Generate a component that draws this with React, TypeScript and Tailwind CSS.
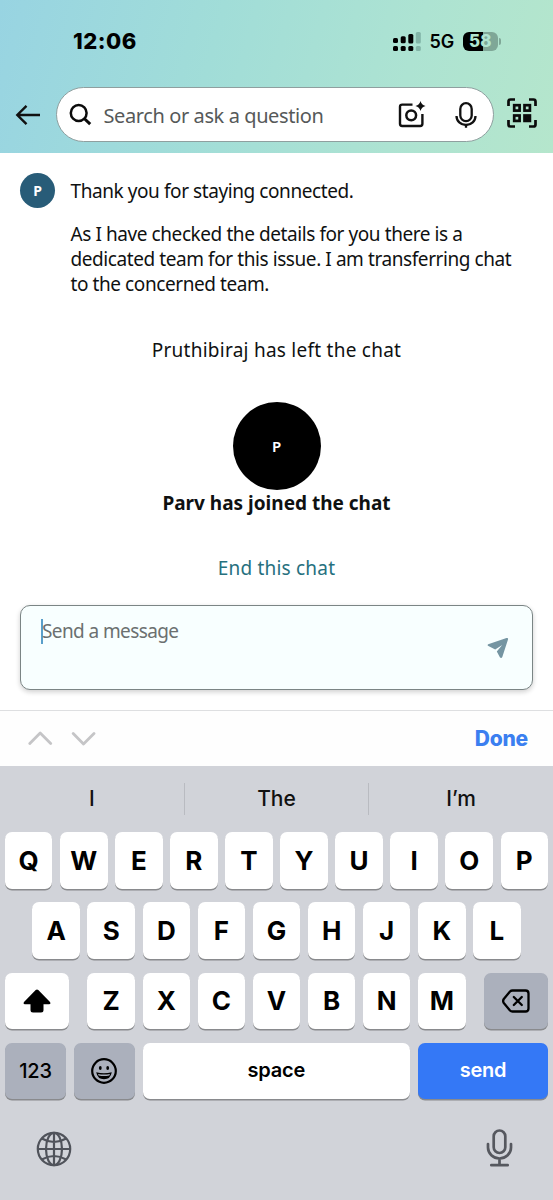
import type { ReactNode } from "react";
import clsx from "clsx";

const rows = ["QWERTYUIOP", "ASDFGHJKL", "ZXCVBNM"];
const suggestions = ["I", "The", "I’m"];

function StatusBar() {
  return (
    <div className="flex h-[82px] items-center pl-[73px] pr-[52px] font-['Inter',sans-serif] text-black">
      <span className="text-[22px] font-extrabold leading-none tracking-[0.5px]">12:06</span>
      <svg className="ml-auto" width="28" height="19" viewBox="0 0 28 19">
        <rect x="0" y="6" width="5" height="5" rx="1.5" />
        <rect x="7.7" y="4.3" width="5" height="7" rx="1.5" />
        <rect x="15.3" y="2" width="5" height="9.5" rx="1.5" />
        <rect x="0" y="14" width="5" height="5" rx="1.5" />
        <rect x="7.7" y="14" width="5" height="5" rx="1.5" />
        <rect x="15.3" y="14" width="5" height="5" rx="1.5" />
        <g fill="#82b5a7">
          <rect x="22.8" y="0" width="5" height="11.5" rx="1.5" />
          <rect x="22.8" y="14" width="5" height="5" rx="1.5" />
        </g>
      </svg>
      <span className="ml-[9px] w-[27px] pt-px text-[18px] font-semibold leading-none">5G</span>
      <div className="ml-[6px] flex h-[19px] w-[35.5px] items-center justify-center rounded-[6px] bg-linear-to-r from-black from-58% to-[#7fa797] to-58%">
        <span className="text-[17px] font-extrabold leading-none text-[#b0e5d0]">58</span>
      </div>
      <span className="ml-px h-[7px] w-[2px] rounded-r-full bg-[#7fa797]" />
    </div>
  );
}

function SearchHeader() {
  return (
    <div className="flex items-center pl-[15px] pt-[5px]">
      <svg width="26" height="22" viewBox="0 0 26 22" fill="none" stroke="#111" strokeWidth="2.4">
        <path d="M25 11H2.5M11.5 1.8L2.3 11l9.2 9.2" />
      </svg>
      <div className="ml-[14.5px] flex h-[55px] w-[438.5px] items-center rounded-full border border-[#8f9f9f] bg-white pl-[12px] pr-[16px]">
        <svg width="24" height="24" viewBox="0 0 24 24" fill="none" stroke="#0b0b0b">
          <circle cx="9.7" cy="10" r="7.9" strokeWidth="2.5" />
          <path d="M15.2 15.5l6 5.7" strokeWidth="3" />
        </svg>
        <span className="ml-[11px] pt-[3px] font-['Noto_Sans',sans-serif] text-[20px] tracking-[-0.4px] text-[#565959]">
          Search or ask a question
        </span>
        <svg className="ml-auto" width="28" height="28" viewBox="0 0 28 28" fill="none" stroke="#111" strokeWidth="2.4">
          <path d="M14.5 3.6H4.2Q2 3.6 2 5.8V22.800Q2 25 4.200 25H22.200Q24.400 25 24.400 22.800V13" />
          <circle cx="13.200" cy="14.300" r="4.900" strokeWidth="2.500" />
          <path d="M22.500 0Q23.500 4 27.500 5Q23.500 6 22.500 10Q21.500 6 17.500 5Q21.500 4 22.500 0z" fill="#111" stroke="none" />
        </svg>
        <svg className="ml-[29px]" width="22" height="26" viewBox="0 0 22 26" fill="none" stroke="#111" strokeWidth="2.300">
          <rect x="5.300" y="1.200" width="11.400" height="18" rx="5.700" />
          <path d="M1.500 14a9.500 9 0 0 0 19 0M11 23v2.800" />
        </svg>
      </div>
      <svg className="ml-[13px] -mt-[3px]" width="30" height="30" viewBox="0 0 30 30" fill="none" stroke="#0b0b0b" strokeWidth="2.700">
        <path d="M1.500 8V3.500q0-2 2-2H8M22 1.500h4.500q2 0 2 2V8M28.500 22v4.500q0 2-2 2H22M8 28.500H3.500q-2 0-2-2V22" />
        <rect x="7.200" y="7.200" width="5.400" height="5.400" />
        <rect x="17.500" y="7.200" width="5.400" height="5.400" />
        <rect x="7.200" y="17.500" width="5.400" height="5.400" />
        <rect x="17.500" y="17.500" width="5.400" height="5.400" fill="#0b0b0b" />
      </svg>
    </div>
  );
}

function Chat() {
  return (
    <main className="flex h-[557px] flex-col px-5 font-['Noto_Sans',sans-serif] text-[19px] leading-[25px] text-[#0f1111]">
      <div className="flex pt-[20px]">
        <div className="flex size-[35px] shrink-0 items-center justify-center rounded-full bg-[#285c78] text-[14px] font-bold text-white">
          P
        </div>
        <div className="ml-[15.5px] pt-[6px] tracking-[-0.42px]">
          <p className="whitespace-nowrap">Thank you for staying connected.</p>
          <p className="mt-[18px] whitespace-nowrap">
            As I have checked the details for you there is a
            <br />
            dedicated team for this issue. I am transferring chat
            <br />
            to the concerned team.
          </p>
        </div>
      </div>
      <p className="mt-[41px] text-center tracking-[0.25px]">Pruthibiraj has left the chat</p>
      <div className="mx-auto mt-[39px] flex size-[88px] items-center justify-center rounded-full bg-black text-[15px] font-semibold text-white">
        P
      </div>
      <p className="mt-px text-center font-bold">Parv has joined the chat</p>
      <p className="mt-[40px] text-center tracking-[0.2px] text-[#26707e]">End this chat</p>
      <div className="mt-[24px] flex h-[85px] items-start justify-between rounded-[10px] border border-[#7b8585] bg-[#f8ffff] pl-[20px] pr-[23px] shadow-[0_2px_5px_rgba(15,17,17,0.2)]">
        <div className="mt-[13px] flex items-center text-[#6b7070]">
          <span className="h-[25px] w-[2px] bg-[#5a9fca]" />
          <span className="-ml-px tracking-[-0.6px]">Send a message</span>
        </div>
        <svg className="mt-[31px]" width="22" height="22" viewBox="0 0 22 22">
          <path d="M1.200 7.200L19.500 1Q21.500.5 21 2.500L15.300 20Q14.500 21.500 13 20.500L9.800 14.500L15.200 8L8.200 12.500L1.400 9Q-.2 8 1.200 7.200z" fill="#7595a2" />
        </svg>
      </div>
    </main>
  );
}

function InputAccessory() {
  return (
    <div className="flex h-[56px] items-center border-t border-[#dedfe1] bg-[#fefefe] pl-[28px] pr-[25px]">
      <svg width="68" height="16" viewBox="0 0 68 16" fill="none" stroke="#c5c5c7" strokeWidth="2.800" strokeLinecap="round" strokeLinejoin="round">
        <path d="M1.800 12.500L12.200 2L22.700 12.500M45.200 2.500L55.500 13L66 2.500" />
      </svg>
      <span className="ml-auto font-['Inter',sans-serif] text-[21px] font-extrabold tracking-[-0.2px] text-[#3b7ff0]">
        Done
      </span>
    </div>
  );
}

function Key({ children, className }: { children: ReactNode; className?: string }) {
  return (
    <div
      className={clsx(
        "flex h-[56.500px] items-center justify-center rounded-[7px] shadow-[0_1.500px_0_#898a8d]",
        className,
      )}
    >
      {children}
    </div>
  );
}

function LetterRow({ letters }: { letters: string }) {
  return (
    <div className="flex justify-center gap-[7.600px]">
      {letters.split("").map((letter) => (
        <Key key={letter} className="w-[47.500px] bg-white text-[26px] font-bold">
          {letter}
        </Key>
      ))}
    </div>
  );
}

function Keyboard() {
  return (
    <div className="h-[434px] bg-[#d1d3d9] font-['Inter',sans-serif] text-black">
      <div className="flex h-[66px] items-center">
        {suggestions.map((word, i) => (
          <div
            key={word}
            className={clsx(
              "flex h-[32px] flex-1 items-center justify-center text-[21px] font-medium text-[#111]",
              i > 0 && "border-l border-[#b9bbc1]",
            )}
          >
            {word}
          </div>
        ))}
      </div>
      <div className="flex flex-col gap-[13.800px] px-[5px]">
        <LetterRow letters={rows[0]} />
        <LetterRow letters={rows[1]} />
        <div className="flex justify-between">
          <Key className="w-[64px] bg-white">
            <svg width="28" height="24" viewBox="0 0 28 24">
              <path d="M12.700 1Q14 0 15.300 1L27 13Q28.200 15 26 15.300H20.500V21Q20.500 23.500 18 23.500H10Q7.500 23.500 7.500 21V15.300H2Q-.2 15 1 13z" />
            </svg>
          </Key>
          <LetterRow letters={rows[2]} />
          <Key className="w-[64px] bg-[#abb0bc]">
            <svg width="28" height="24" viewBox="0 0 28 24" fill="none" stroke="#000" strokeWidth="2.300" strokeLinecap="round" strokeLinejoin="round">
              <path d="M10.500 1.500H23.500Q26.500 1.500 26.500 4.500V19.500Q26.500 22.500 23.500 22.500H10.500Q9 22.500 8 21.500L1.800 14Q.5 12 1.800 10L8 2.500Q9 1.500 10.500 1.500z" />
              <path d="M11.800 8l8 8M19.800 8l-8 8" />
            </svg>
          </Key>
        </div>
        <div className="flex gap-[7.800px] text-[20px] font-semibold tracking-[-0.2px]">
          <Key className="w-[61px] bg-[#abb0bc] font-medium">123</Key>
          <Key className="w-[61px] bg-[#abb0bc]">
            <svg width="26" height="26" viewBox="0 0 26 26">
              <circle cx="13" cy="13" r="11.800" fill="none" stroke="#000" strokeWidth="2.200" />
              <ellipse cx="9.300" cy="10" rx="1.400" ry="1.900" />
              <ellipse cx="16.700" cy="10" rx="1.400" ry="1.900" />
              <path d="M5.200 14.300Q13 16.200 20.800 14.300Q19.500 21.300 13 21.300Q6.500 21.300 5.200 14.300z" />
              <path d="M7 15.900Q13 17.200 19 15.900L18.300 17.400Q13 18.500 7.700 17.400z" fill="#abb0bc" />
            </svg>
          </Key>
          <Key className="flex-1 bg-white pb-[3px]">space</Key>
          <Key className="w-[130px] bg-[#3478f6] pb-[3px] text-white">send</Key>
        </div>
      </div>
      <div className="flex items-start justify-between pl-[36px] pr-[40px] pt-[29px]">
        <svg className="mt-[3px]" width="36" height="36" viewBox="0 0 36 36" fill="none" stroke="#50535b" strokeWidth="2.200">
          <circle cx="18" cy="18" r="16.200" />
          <ellipse cx="18" cy="18" rx="8" ry="16.200" />
          <path d="M18 1.800v32.400M1.800 18h32.400M5.800 7.500Q18 14.500 30.200 7.500M5.800 28.500Q18 21.500 30.200 28.500" />
        </svg>
        <svg className="mt-px" width="27" height="38" viewBox="0 0 27 38" fill="none" stroke="#56585f" strokeWidth="2.700" strokeLinecap="round">
          <rect x="7.700" y="1.500" width="11.600" height="22.500" rx="5.800" />
          <path d="M2 15v3.500a11.500 11 0 0 0 23 0V15M13.500 29.500V36M5.300 36.200H21.700" />
        </svg>
      </div>
    </div>
  );
}

export default function App() {
  return (
    <div className="flex h-[1200px] w-[553px] flex-col overflow-hidden bg-white">
      <header className="h-[153px] bg-linear-[105deg,#98d4e2_0%,#a1ddd8_38%,#ade3d2_72%,#b5e6cc_100%]">
        <StatusBar />
        <SearchHeader />
      </header>
      <Chat />
      <InputAccessory />
      <Keyboard />
    </div>
  );
}
